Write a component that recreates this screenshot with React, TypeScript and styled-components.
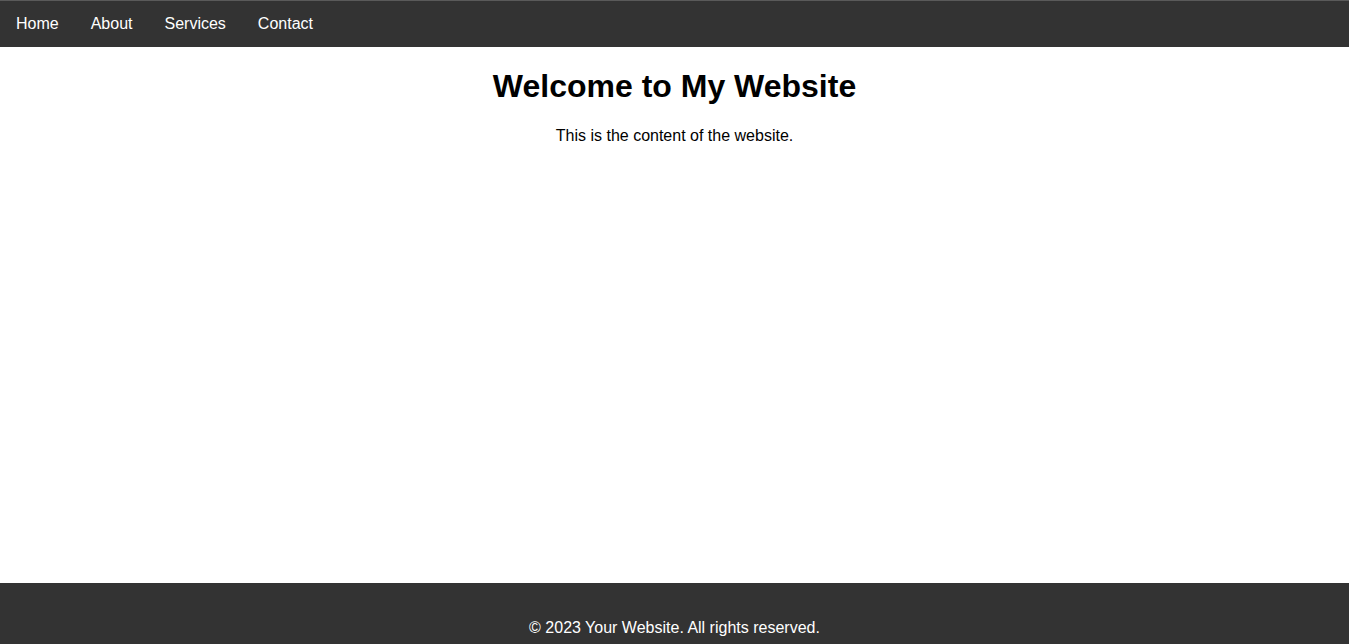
import React from "react";
import styled, { createGlobalStyle } from "styled-components";

const GlobalStyle = createGlobalStyle`
  html, body {
    margin: 0;
    padding: 0;
    background: #ffffff;
    font-family: "Liberation Sans", Arial, sans-serif;
    color: #000;
  }
`;

const NavBar = styled.nav`
  display: flex;
  background: #333333;
  border-top: 1px solid #5a5a5a;
`;

const NavLink = styled.a`
  display: block;
  color: #ffffff;
  text-decoration: none;
  font-size: 16px;
  padding: 14px 16px;
`;

const Main = styled.main`
  display: flow-root;
  min-height: 536px;
  text-align: center;
`;

const Title = styled.h1`
  font-size: 32px;
  font-weight: bold;
  margin: 0.67em 0;
`;

const Text = styled.p`
  font-size: 16px;
  margin: 16px 0;
`;

const Footer = styled.footer`
  background: #333333;
  color: #ffffff;
  text-align: center;
  padding: 20px;
`;

const FooterText = styled.p`
  margin: 16px 0;
  font-size: 16px;
`;

export default function App() {
  return (
    <>
      <GlobalStyle />
      <NavBar>
        {["Home", "About", "Services", "Contact"].map((l) => (
          <NavLink key={l} href="#">
            {l}
          </NavLink>
        ))}
      </NavBar>
      <Main>
        <Title>Welcome to My Website</Title>
        <Text>This is the content of the website.</Text>
      </Main>
      <Footer>
        <FooterText>© 2023 Your Website. All rights reserved.</FooterText>
      </Footer>
    </>
  );
}
